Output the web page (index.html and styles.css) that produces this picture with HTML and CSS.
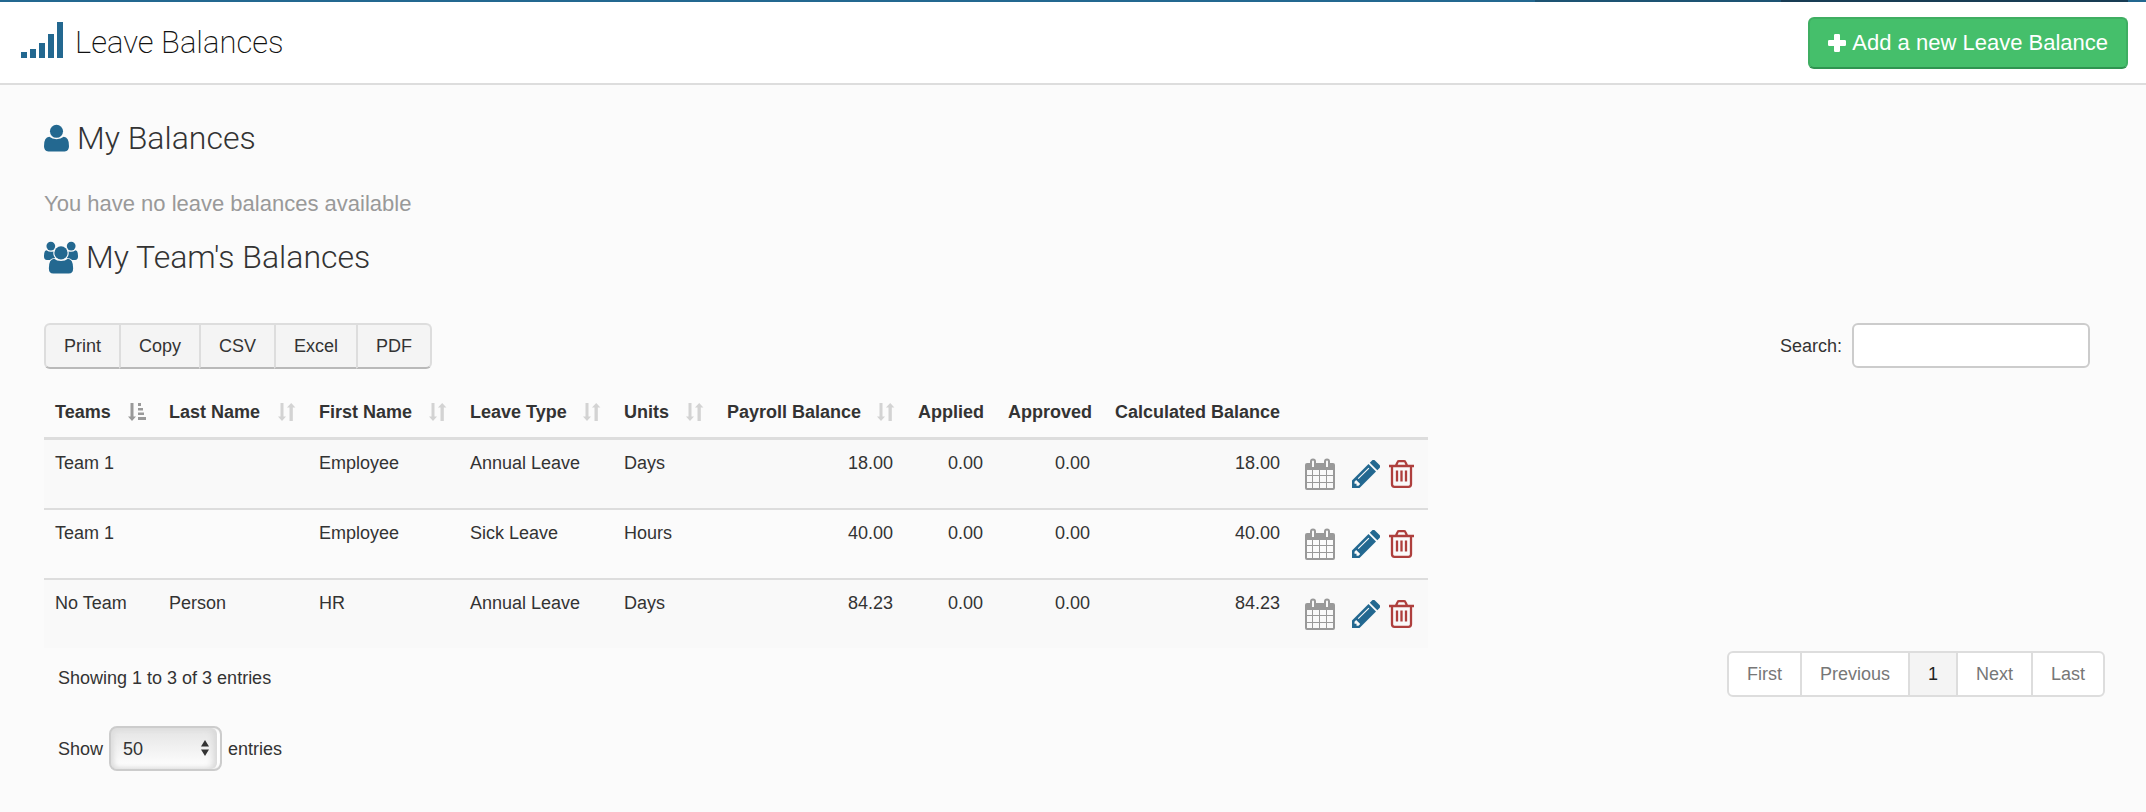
FILE: index.html
```html
<!DOCTYPE html>
<html lang="en">
<head>
<meta charset="utf-8">
<title>Leave Balances</title>
<link rel="stylesheet" href="styles.css">
</head>
<body>
<svg class="sprite" aria-hidden="true">
  <symbol id="sort" viewBox="0 0 18 18"><path d="M2.500 0h3v13.500h2.500L4 18 0 13.500h2.500zM11.500 18V4.500H9L13.200 0l4.200 4.500h-2.600V18z"/></symbol>
  <symbol id="sort-asc" viewBox="0 0 18 18"><path d="M2.500 0h3v13.500h2.500L4 18 0 13.500h2.500zM10 0h3v3h-3zM10 5h5v2.500h-5zM10 9.500h6V12h-6zM10 14h8v3h-8z"/></symbol>
  <symbol id="calendar" viewBox="0 0 30 32"><path fill-rule="evenodd" d="M2 5h3V3.500a3 3 0 0 1 6 0V5h8V3.500a3 3 0 0 1 6 0V5h3a2 2 0 0 1 2 2v23a2 2 0 0 1-2 2H2a2 2 0 0 1-2-2V7a2 2 0 0 1 2-2zM7 3.500v5.500h2V3.500a1 1 0 0 0-2 0zM21 3.500v5.500h2V3.500a1 1 0 0 0-2 0zM2 12v5h5v-5zM8 12v5h6v-5zM15 12v5h6v-5zM22 12v5h6v-5zM2 18v6h5v-6zM8 18v6h6v-6zM15 18v6h6v-6zM22 18v6h6v-6zM2 25v5h5v-5zM8 25v5h6v-5zM15 25v5h6v-5zM22 25v5h6v-5z"/></symbol>
  <symbol id="pencil" viewBox="0 0 28 28"><path fill-rule="evenodd" d="M0 28v-7.500L16.500 4l7.500 7.500L7.500 28zM17.800 2.700 19.800.7a2.400 2.400 0 0 1 3.400 0l4.100 4.100a2.400 2.400 0 0 1 0 3.400l-2 2zM2.500 21.800v2h2v2h2l1.700-1.700-4-4zM5.800 18.300 16.500 7.700l.8.800L6.600 19.100z"/></symbol>
  <symbol id="trash" viewBox="0 0 25 28"><path fill="none" stroke="currentColor" stroke-width="2.300" d="M0 6h25M7 5.500 8.700 1.900Q9 1.200 10 1.200h5q1 0 1.300.7L18 5.500M3 6v18.300Q3 26.800 5.500 26.800h14q2.500 0 2.500-2.500V6M8 10.500v11M12.500 10.500v11M17 10.500v11"/></symbol>
</svg>

<div class="top-strip"><span class="strip-link"></span><span class="strip-user"></span></div>
<header class="page-header">
  <h1 class="page-title">
    <svg class="icon icon-signal" viewBox="0 0 42 36" aria-hidden="true"><path d="M0 30h6v6H0zM9 27h6v9H9zM18 21h6v15h-6zM27 12h6v24h-6zM36 0h6v36h-6z"/></svg>
    <span>Leave Balances</span>
  </h1>
  <button class="btn-add" type="button"><svg class="icon icon-plus" viewBox="0 0 18 18" aria-hidden="true"><path d="M6 1.200Q6 0 7.200 0h3.600Q12 0 12 1.200V6h4.800Q18 6 18 7.200v3.600q0 1.200-1.200 1.200H12v4.800q0 1.200-1.200 1.200H7.200Q6 18 6 16.800V12H1.200Q0 12 0 10.800V7.200Q0 6 1.200 6H6z"/></svg>Add a new Leave Balance</button>
</header>

<main class="content">
  <h2 class="section-title">
    <svg class="icon icon-user" viewBox="0 0 26 28" aria-hidden="true"><circle cx="13" cy="7" r="6.800"/><path d="M5.500 12.800Q8.500 15.300 13 15.300t7.500-2.500Q26 13 26 22.500q0 5-4.500 5.500h-17Q0 27.500 0 22.500 0 13 5.500 12.800z"/></svg>
    <span>My Balances</span>
  </h2>
  <p class="empty-note">You have no leave balances available</p>
  <h2 class="section-title">
    <svg class="icon icon-users" viewBox="0 0 35 33" aria-hidden="true"><circle cx="7" cy="4.700" r="4.500"/><circle cx="28" cy="4.700" r="4.500"/><circle cx="17.500" cy="11.700" r="6.800"/><path d="M2.500 9Q6 11.500 9.700 10.200 9 14.500 11.500 17 8 17 6 19.200H3Q0 19 0 15.500 0 9.300 2.500 9zM32.500 9Q29 11.500 25.300 10.200 26 14.500 23.500 17 27 17 29 19.200h3q3-.2 3-3.700Q35 9.300 32.500 9zM10.500 17.800Q13 20.200 17.500 20.200t7-2.400Q30 18.300 30 27.500q0 5.300-4.500 5.500h-16Q5 32.800 5 27.500q0-9.200 5.500-9.700z"/></svg>
    <span>My Team's Balances</span>
  </h2>

  <div class="toolbar">
    <div class="export-group">
      <button type="button">Print</button><button type="button">Copy</button><button type="button">CSV</button><button type="button">Excel</button><button type="button">PDF</button>
    </div>
    <label class="search">Search: <input type="search"></label>
  </div>

  <table class="balances">
    <colgroup><col class="c-team"><col class="c-last"><col class="c-first"><col class="c-type"><col class="c-units"><col class="c-payroll"><col class="c-applied"><col class="c-approved"><col class="c-calc"><col class="c-actions"></colgroup>
    <thead>
      <tr>
        <th><div class="th">Teams<svg class="sort active"><use href="#sort-asc"/></svg></div></th>
        <th><div class="th">Last Name<svg class="sort"><use href="#sort"/></svg></div></th>
        <th><div class="th">First Name<svg class="sort"><use href="#sort"/></svg></div></th>
        <th><div class="th">Leave Type<svg class="sort"><use href="#sort"/></svg></div></th>
        <th><div class="th">Units<svg class="sort"><use href="#sort"/></svg></div></th>
        <th><div class="th">Payroll Balance<svg class="sort"><use href="#sort"/></svg></div></th>
        <th>Applied</th><th>Approved</th><th>Calculated Balance</th><th></th>
      </tr>
    </thead>
    <tbody>
      <tr>
        <td>Team 1</td><td></td><td>Employee</td><td>Annual Leave</td><td>Days</td><td class="num">18.00</td><td class="num">0.00</td><td class="num">0.00</td><td class="num">18.00</td>
        <td><div class="actions"><a href="#" aria-label="Calendar"><svg class="a-cal"><use href="#calendar"/></svg></a><a href="#" aria-label="Edit"><svg class="a-edit"><use href="#pencil"/></svg></a><a href="#" aria-label="Delete"><svg class="a-del"><use href="#trash"/></svg></a></div></td>
      </tr>
      <tr>
        <td>Team 1</td><td></td><td>Employee</td><td>Sick Leave</td><td>Hours</td><td class="num">40.00</td><td class="num">0.00</td><td class="num">0.00</td><td class="num">40.00</td>
        <td><div class="actions"><a href="#" aria-label="Calendar"><svg class="a-cal"><use href="#calendar"/></svg></a><a href="#" aria-label="Edit"><svg class="a-edit"><use href="#pencil"/></svg></a><a href="#" aria-label="Delete"><svg class="a-del"><use href="#trash"/></svg></a></div></td>
      </tr>
      <tr>
        <td>No Team</td><td>Person</td><td>HR</td><td>Annual Leave</td><td>Days</td><td class="num">84.23</td><td class="num">0.00</td><td class="num">0.00</td><td class="num">84.23</td>
        <td><div class="actions"><a href="#" aria-label="Calendar"><svg class="a-cal"><use href="#calendar"/></svg></a><a href="#" aria-label="Edit"><svg class="a-edit"><use href="#pencil"/></svg></a><a href="#" aria-label="Delete"><svg class="a-del"><use href="#trash"/></svg></a></div></td>
      </tr>
    </tbody>
  </table>

  <div class="table-footer">
    <div class="summary">
      <p class="info">Showing 1 to 3 of 3 entries</p>
      <div class="length">
        <label for="page-size">Show</label>
        <span class="select-box">
          <select id="page-size"><option>50</option></select>
          <svg class="carets" viewBox="0 0 8 16" aria-hidden="true"><path d="M0 6.500 4 0l4 6.500zM0 9.500h8L4 16z"/></svg>
        </span>
        <span>entries</span>
      </div>
    </div>
    <nav class="pager" aria-label="Pages">
      <a href="#">First</a><a href="#">Previous</a><a href="#" class="current" aria-current="page">1</a><a href="#">Next</a><a href="#">Last</a>
    </nav>
  </div>
</main>
</body>
</html>
```
FILE: styles.css
```css
* { box-sizing: border-box; }
body {
  margin: 0;
  background: #fbfbfb;
  color: #333;
  font: 18px/26px "Liberation Sans", Arial, sans-serif;
}
.sprite { display: none; }
.icon { fill: #236890; flex: none; }
h1, h2, p { margin: 0; }
button, input, select { font: inherit; color: inherit; }

.top-strip {
  display: flex;
  justify-content: flex-end;
  height: 2px;
  padding-right: 18px;
  background: #236890;
}
.strip-link { width: 246px; background: #1d5373; }
.strip-user { width: 347px; background: #183c54; }

.page-header {
  display: flex;
  justify-content: space-between;
  align-items: center;
  height: 83px;
  padding: 0 18px 0 21px;
  background: #fff;
  border-bottom: 2px solid #ddd;
}
.page-title {
  display: flex;
  gap: 12px;
  color: #111;
  font: 200 31px/42px Roboto, sans-serif;
}
.icon-signal { width: 42px; height: 36px; }
.btn-add {
  display: flex;
  align-items: center;
  gap: 6px;
  height: 52px;
  padding: 0 18px;
  color: #fff;
  font-size: 22px;
  background: #45bf6b;
  border: 2px solid #3fae62;
  border-bottom-color: #2f9450;
  border-radius: 6px;
}
.icon-plus { width: 18px; height: 18px; fill: #fff; }

.content { padding: 32px 41px 40px 44px; }
.section-title {
  display: flex;
  align-items: center;
  gap: 8px;
  color: #333;
  font: 300 32px/42px Roboto, sans-serif;
}
.icon-user { width: 25px; height: 28px; }
.icon-users { width: 34px; height: 33px; }
.empty-note {
  margin: 31px 0 18px;
  color: #999;
  font-size: 22px;
  line-height: 28px;
}

.toolbar {
  display: flex;
  justify-content: space-between;
  align-items: flex-start;
  margin-top: 45px;
  padding-right: 15px;
}
.export-group { display: flex; }
.export-group button {
  height: 46px;
  padding: 0 18px;
  background: #f4f4f4;
  border: 2px solid #ddd;
  border-bottom-color: #b9b9b9;
}
.export-group button + button { margin-left: -2px; }
.export-group button:first-child { border-radius: 6px 0 0 6px; }
.export-group button:last-child { border-radius: 0 6px 6px 0; }
.search { display: flex; align-items: center; gap: 10px; }
.search input {
  width: 238px;
  height: 45px;
  padding: 0 10px;
  background: #fff;
  border: 2px solid #ccc;
  border-radius: 6px;
}

.balances {
  margin-top: 18px;
  table-layout: fixed;
  border-collapse: separate;
  border-spacing: 0;
}
.c-team { width: 114px; }
.c-last { width: 150px; }
.c-first { width: 151px; }
.c-type { width: 154px; }
.c-units { width: 103px; }
.c-payroll { width: 191px; }
.c-applied { width: 90px; }
.c-approved { width: 107px; }
.c-calc { width: 190px; }
.c-actions { width: 133px; }
.balances th {
  height: 53px;
  padding: 0 12px 0 11px;
  text-align: left;
  white-space: nowrap;
  border-bottom: 3px solid #ddd;
}
.th { display: flex; align-items: center; justify-content: space-between; }
.sort { width: 18px; height: 18px; fill: #d3d3d3; }
.sort.active { fill: #999; }
.balances td {
  height: 70px;
  padding: 10px 14px 0 11px;
  vertical-align: top;
  border-bottom: 2px solid #ddd;
}
.balances tr:last-child td { height: 68px; border-bottom: 0; }
.balances tbody tr:nth-child(odd) { background: #f9f9f9; }
.balances .num { text-align: right; }
.actions { display: flex; align-items: center; padding-top: 8px; }
.actions a { display: flex; }
.a-cal { width: 30px; height: 32px; margin-right: 17px; fill: #999; }
.a-edit { width: 28px; height: 28px; margin-right: 9px; fill: #236890; }
.a-del { width: 25px; height: 28px; color: #ae3f3d; }

.table-footer { display: flex; justify-content: space-between; align-items: flex-start; }
.summary { padding: 17px 0 0 14px; }
.length { display: flex; align-items: center; gap: 6px; margin-top: 35px; }
.select-box { position: relative; display: flex; }
.select-box select {
  appearance: none;
  width: 113px;
  height: 45px;
  padding: 0 12px;
  background: linear-gradient(#e4e4e4, #fff);
  border: 2px solid #ccc;
  border-radius: 8px;
  box-shadow: inset 3px 0 5px #ddd, inset -3px 0 0 #fff, inset -7px 0 6px #d8d8d8;
}
.carets {
  position: absolute;
  right: 13px;
  top: 14px;
  width: 8px;
  height: 16px;
  fill: #333;
  pointer-events: none;
}

.pager { display: flex; margin-top: 3px; }
.pager a {
  height: 46px;
  padding: 8px 18px;
  color: #777;
  text-decoration: none;
  background: #fff;
  border: 2px solid #ddd;
}
.pager a + a { margin-left: -2px; }
.pager a:first-child { border-radius: 6px 0 0 6px; }
.pager a:last-child { border-radius: 0 6px 6px 0; }
.pager .current { color: #222; background: #f4f4f4; }
```
